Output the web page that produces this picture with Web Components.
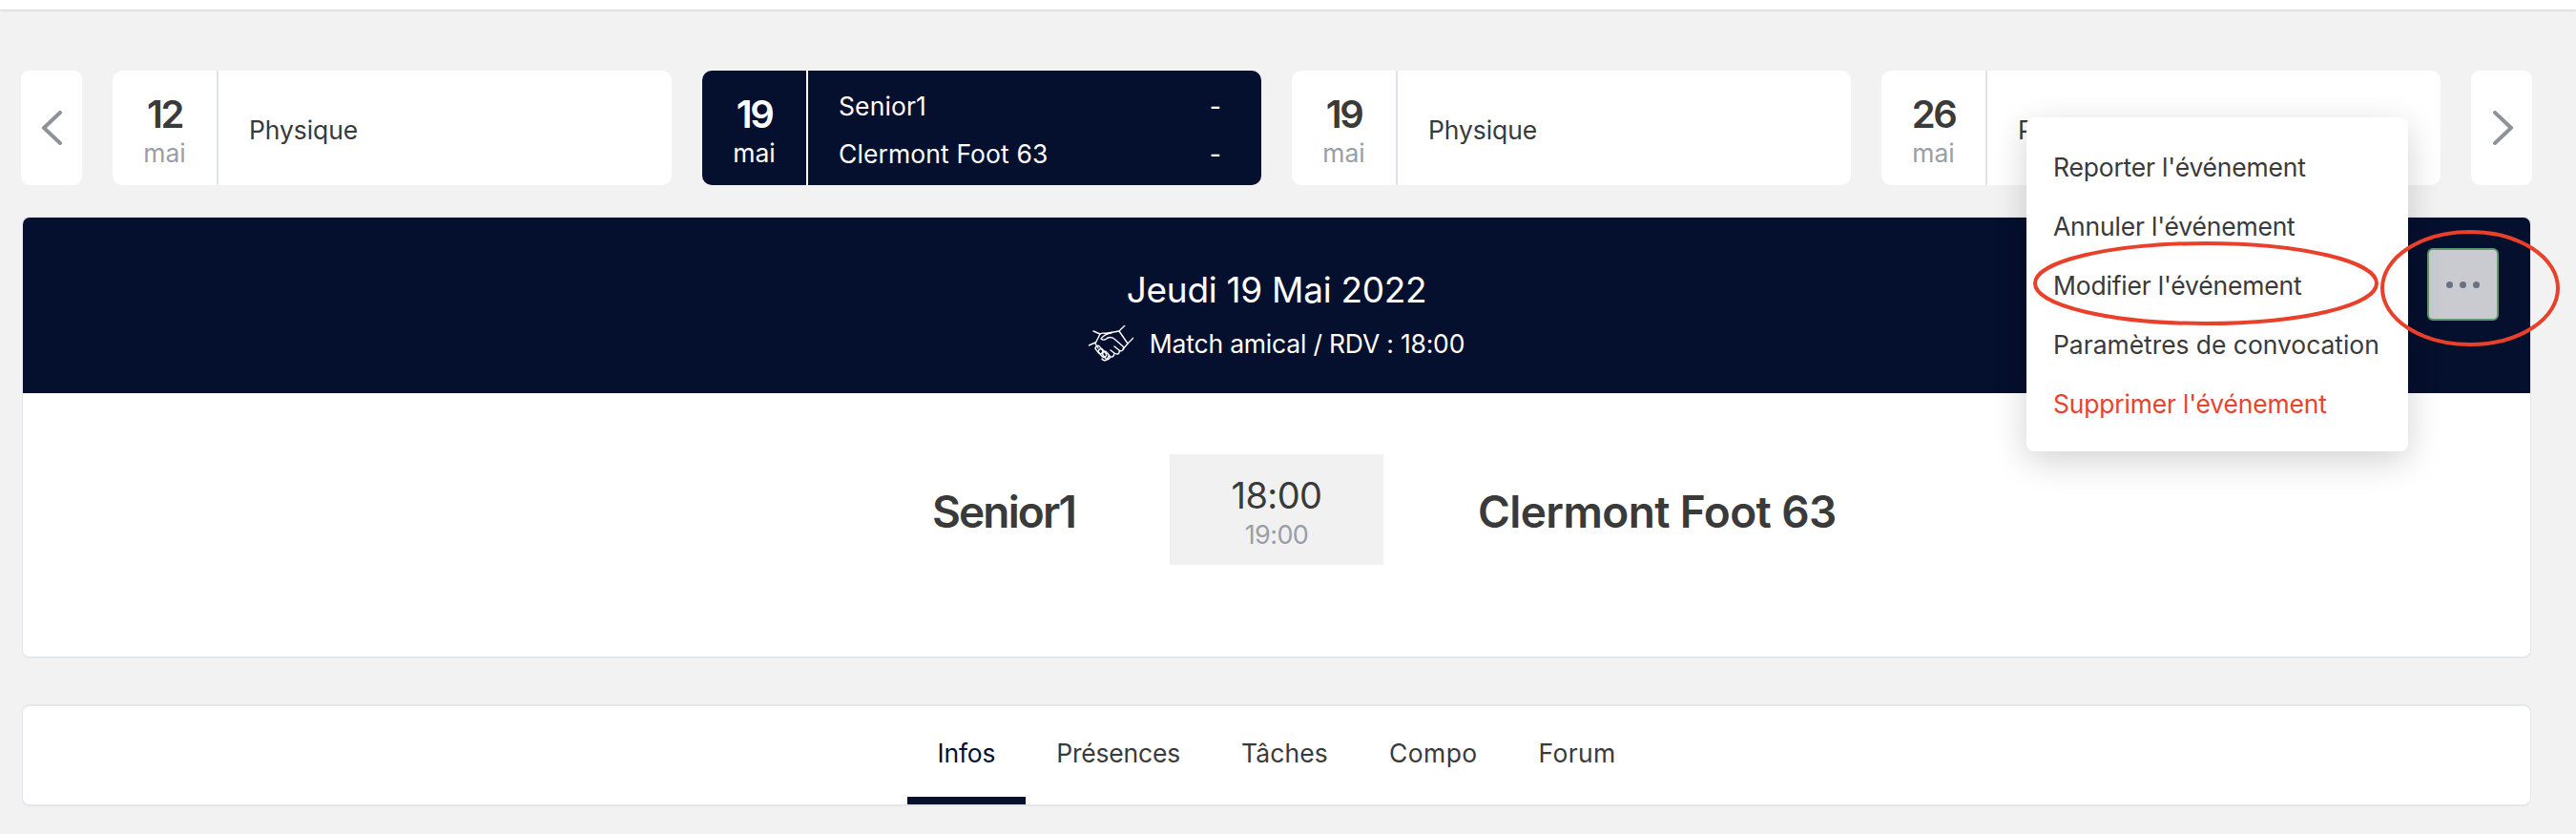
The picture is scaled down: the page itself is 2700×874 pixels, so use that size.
<!DOCTYPE html>
<html lang="fr">
<head>
<meta charset="utf-8">
<title>Jeudi 19 Mai 2022</title>
<style>
  html, body { margin: 0; padding: 0; background: #f2f2f2; }
  body { font-family: Inter, "Liberation Sans", sans-serif; color: #3a3a3a; height: 874px; overflow: hidden; position: relative; }
</style>
</head>
<body>
<top-bar></top-bar>

<event-strip>
  <nav-arrow dir="prev"></nav-arrow>
  <event-card day="12" month="mai">Physique</event-card>
  <event-card day="19" month="mai" active>
    <match-line name="Senior1"></match-line>
    <match-line name="Clermont Foot 63"></match-line>
  </event-card>
  <event-card day="19" month="mai">Physique</event-card>
  <event-card day="26" month="mai">Physique</event-card>
  <nav-arrow dir="next"></nav-arrow>
</event-strip>

<event-panel date="Jeudi 19 Mai 2022" info="Match amical / RDV : 18:00" home="Senior1" away="Clermont Foot 63" time="18:00" sub="19:00"></event-panel>

<tab-bar>
  <tab-item active>Infos</tab-item>
  <tab-item>Présences</tab-item>
  <tab-item style="letter-spacing:.1px">Tâches</tab-item>
  <tab-item style="letter-spacing:.4px">Compo</tab-item>
  <tab-item style="letter-spacing:.3px">Forum</tab-item>
</tab-bar>

<action-menu>
  <menu-entry>Reporter l'événement</menu-entry>
  <menu-entry>Annuler l'événement</menu-entry>
  <menu-entry>Modifier l'événement</menu-entry>
  <menu-entry style="letter-spacing:-.05px">Paramètres de convocation</menu-entry>
  <menu-entry danger>Supprimer l'événement</menu-entry>
</action-menu>

<red-marks></red-marks>

<script>
class TopBar extends HTMLElement {
  constructor() {
    super();
    this.attachShadow({ mode: 'open' }).innerHTML = `
      <style>
        :host { display: block; height: 10px; background: #fff; box-shadow: 0 1px 3px rgba(0,0,0,.14); }
      </style>`;
  }
}

class EventStrip extends HTMLElement {
  constructor() {
    super();
    this.attachShadow({ mode: 'open' }).innerHTML = `
      <style>
        :host { display: flex; gap: 32px; margin: 64px 0 0 22px; height: 120px; }
      </style>
      <slot></slot>`;
  }
}

class NavArrow extends HTMLElement {
  constructor() {
    super();
    const next = this.getAttribute('dir') === 'next';
    const path = next ? 'M3 2 L20 18 L3 34' : 'M21 2 L4 18 L21 34';
    this.attachShadow({ mode: 'open' }).innerHTML = `
      <style>
        :host { display: flex; align-items: center; justify-content: center; width: 64px; background: #fff; border-radius: 9px; flex: none; }
        svg { display: block; margin-left: ${next ? '3px' : '0'}; }
      </style>
      <svg width="24" height="36" viewBox="0 0 24 36" fill="none" stroke="#8d9399" stroke-width="4" stroke-linecap="round" stroke-linejoin="round"><path d="${path}"/></svg>`;
  }
}

class EventCard extends HTMLElement {
  constructor() {
    super();
    this.attachShadow({ mode: 'open' }).innerHTML = `
      <style>
        :host { display: flex; width: 586px; flex: none; background: #fff; border-radius: 10px; overflow: hidden; color: #3a3a3a; }
        :host([active]) { background: #050f2e; color: #fff; }
        .date { width: 109px; flex: none; border-right: 2px solid #dfe2e8; display: flex; flex-direction: column; align-items: center; padding-top: 22px; }
        :host([active]) .date { border-right-color: #fff; }
        .day { font-size: 40px; line-height: 48px; font-weight: 600; letter-spacing: -2.5px; }
        .month { font-size: 26.5px; line-height: 30px; margin-top: 1px; color: #9a9ea6; }
        :host([active]) .month { color: #fff; }
        .body { flex: 1; min-width: 0; padding: 3px 42px 0 32px; display: flex; flex-direction: column; justify-content: center; font-size: 26.5px; letter-spacing: -.1px; gap: 14px; }
      </style>
      <div class="date"><span class="day">${this.getAttribute('day')}</span><span class="month">${this.getAttribute('month')}</span></div>
      <div class="body"><slot></slot></div>`;
  }
}

class MatchLine extends HTMLElement {
  constructor() {
    super();
    this.attachShadow({ mode: 'open' }).innerHTML = `
      <style>
        :host { display: flex; justify-content: space-between; line-height: 36px; letter-spacing: .1px; }
      </style>
      <span>${this.getAttribute('name')}</span><span>-</span>`;
  }
}

class EventPanel extends HTMLElement {
  constructor() {
    super();
    const a = n => this.getAttribute(n);
    this.attachShadow({ mode: 'open' }).innerHTML = `
      <style>
        :host { display: block; margin: 33px 47px 0 23px; background: #fff; border: 1px solid #e3e6eb; border-bottom-width: 2px; border-radius: 8px; overflow: hidden; height: 463px; box-sizing: border-box; }
        header { background: #050f2e; color: #fff; height: 184px; display: grid; grid-template-columns: 1fr auto 1fr; align-items: center; }
        .mid { grid-column: 2; display: flex; flex-direction: column; align-items: center; padding-top: 24px; }
        .date { font-size: 37px; line-height: 46px; letter-spacing: -.3px; margin-top: -4px; }
        .info { display: flex; align-items: center; gap: 17px; font-size: 26.5px; line-height: 38px; letter-spacing: -.2px; margin-top: 14px; }
        .info svg { display: block; }
        .more { justify-self: end; align-self: start; margin: 32px 33px 0 0; width: 75px; height: 76px; box-sizing: border-box; background: #c9cbd1; border: 2px solid #5f9a6e; border-radius: 6px; display: flex; align-items: center; justify-content: center; gap: 7px; }
        .more i { width: 7px; height: 7px; border-radius: 50%; background: #6a7280; }
        .match { display: flex; gap: 99px; padding-top: 64px; }
        .team { flex: 1; font-size: 46px; line-height: 116px; padding-top: 2px; font-weight: 600; letter-spacing: -.6px; color: #3a3a3a; }
        .team.home { text-align: right; letter-spacing: -1.85px; }
        .clock { width: 224px; height: 116px; box-sizing: border-box; padding-top: 8px; flex: none; background: #f1f1f1; display: flex; flex-direction: column; align-items: center; justify-content: center; gap: 4px; }
        .clock b { font-weight: 400; font-size: 38px; line-height: 42px; color: #3a3a3a; letter-spacing: -.6px; }
        .clock span { font-size: 27px; line-height: 34px; color: #9a9ea6; letter-spacing: -.6px; }
      </style>
      <header>
        <div class="mid">
          <div class="date">${a('date')}</div>
          <div class="info">
            <svg width="47" height="38" viewBox="0 0 47 38" fill="none" stroke="#fff" stroke-width="1.4" stroke-linecap="round" stroke-linejoin="round">
              <path d="M5 6 L12 9 M0 21 L7 18 M32 6 L38 0 M41 19 L47 13"/>
              <path d="M12 9 L7 19 L10 24 M12 9 C15 7 17 9 20 8 L32 6 L41 19 L36 25"/>
              <path d="M24 8 C20 8 15 11 13 14 C15 16 18 15 20 13 C23 12 26 13 28 15 L36 22 C38 25 35 28 32 26 L27 22 M32 26 C33 30 30 31 27 29 L23 26 M27 29 C27 33 24 34 21 32 M21 32 C20 37 16 38 14 35"/>
              <rect x="8.5" y="21" width="5" height="9" rx="2.5" transform="rotate(-40 11 25.5)"/>
              <rect x="12" y="24" width="5" height="10" rx="2.5" transform="rotate(-40 14.5 29)"/>
              <rect x="16" y="27" width="5" height="9" rx="2.5" transform="rotate(-40 18.5 31.5)"/>
            </svg>
            <span>${a('info')}</span>
          </div>
        </div>
        <div class="more"><i></i><i></i><i></i></div>
      </header>
      <div class="match">
        <div class="team home">${a('home')}</div>
        <div class="clock"><b>${a('time')}</b><span>${a('sub')}</span></div>
        <div class="team">${a('away')}</div>
      </div>`;
  }
}

class TabBar extends HTMLElement {
  constructor() {
    super();
    this.attachShadow({ mode: 'open' }).innerHTML = `
      <style>
        :host { display: flex; justify-content: center; margin: 48px 47px 0 23px; height: 107px; box-sizing: border-box; background: #fff; border: 1px solid #e3e6eb; border-width: 2px 1px; border-radius: 8px; overflow: hidden; }
      </style>
      <slot></slot>`;
  }
}

class TabItem extends HTMLElement {
  constructor() {
    super();
    this.attachShadow({ mode: 'open' }).innerHTML = `
      <style>
        :host { display: flex; align-items: center; padding: 3px 32px 0; font-size: 26.5px; letter-spacing: -.2px; color: #3a3a3a; border-bottom: 8px solid transparent; }
        :host([active]) { color: #050f2e; border-bottom-color: #050f2e; }
      </style>
      <slot></slot>`;
  }
}

class ActionMenu extends HTMLElement {
  constructor() {
    super();
    this.attachShadow({ mode: 'open' }).innerHTML = `
      <style>
        :host { display: block; position: absolute; top: 123px; left: 2124px; width: 400px; height: 350px; box-sizing: border-box; padding: 20.5px 0 18px 28px; background: #fff; border-radius: 8px; box-shadow: 0 10px 36px rgba(0,0,0,.18); z-index: 5; }
      </style>
      <slot></slot>`;
  }
}

class MenuEntry extends HTMLElement {
  constructor() {
    super();
    this.attachShadow({ mode: 'open' }).innerHTML = `
      <style>
        :host { display: block; font-size: 26.5px; line-height: 62px; letter-spacing: -.2px; color: #3a3a3a; white-space: nowrap; }
        :host([danger]) { color: #e8432e; }
      </style>
      <slot></slot>`;
  }
}

class RedMarks extends HTMLElement {
  constructor() {
    super();
    this.attachShadow({ mode: 'open' }).innerHTML = `
      <style>
        :host { display: block; position: absolute; top: 0; left: 0; width: 2700px; height: 874px; pointer-events: none; z-index: 6; }
        svg { display: block; }
      </style>
      <svg width="2700" height="874" viewBox="0 0 2700 874" fill="none" stroke="#e8402a" stroke-width="4">
        <ellipse cx="2312" cy="297" rx="179" ry="42"/>
        <ellipse cx="2589" cy="302" rx="92" ry="59"/>
      </svg>`;
  }
}

customElements.define('top-bar', TopBar);
customElements.define('event-strip', EventStrip);
customElements.define('nav-arrow', NavArrow);
customElements.define('event-card', EventCard);
customElements.define('match-line', MatchLine);
customElements.define('event-panel', EventPanel);
customElements.define('tab-bar', TabBar);
customElements.define('tab-item', TabItem);
customElements.define('action-menu', ActionMenu);
customElements.define('menu-entry', MenuEntry);
customElements.define('red-marks', RedMarks);
</script>
</body>
</html>
